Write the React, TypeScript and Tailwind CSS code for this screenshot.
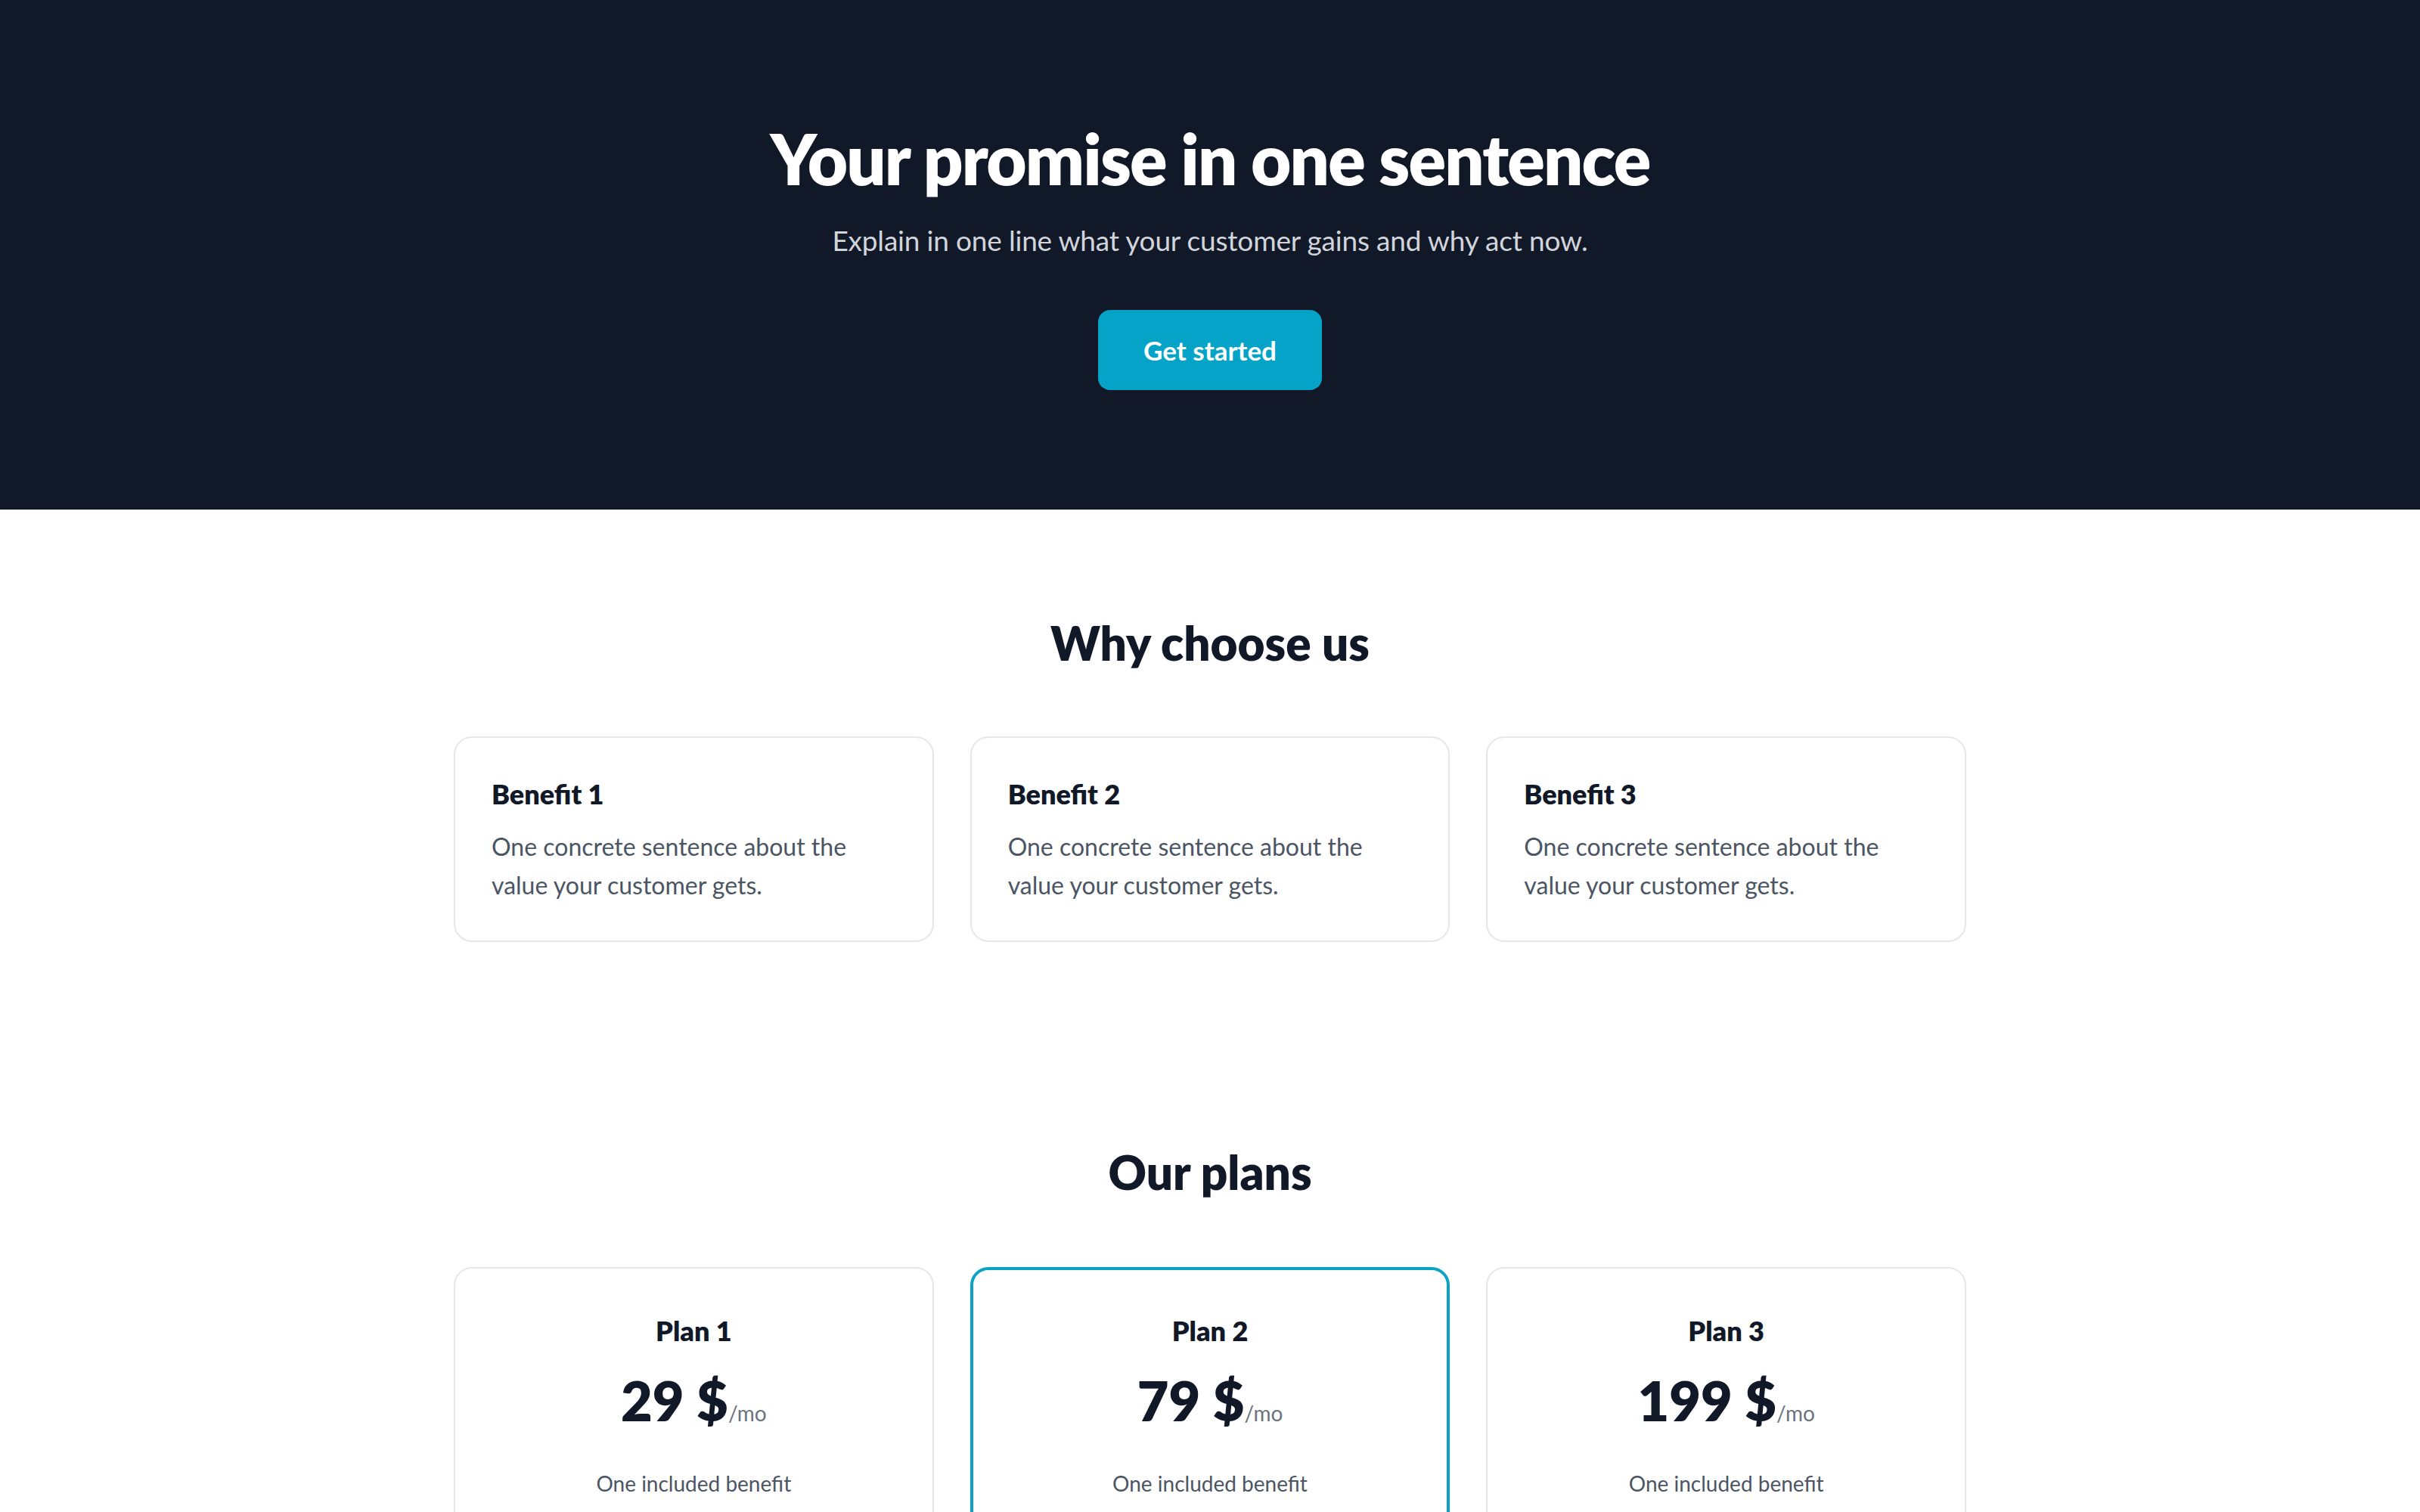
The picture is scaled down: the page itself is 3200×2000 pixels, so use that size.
import React from "react";

const benefits = [
  { title: "Benefit 1", text: "One concrete sentence about the value your customer gets." },
  { title: "Benefit 2", text: "One concrete sentence about the value your customer gets." },
  { title: "Benefit 3", text: "One concrete sentence about the value your customer gets." },
];

const plans = [
  { name: "Plan 1", price: "29 $", featured: false },
  { name: "Plan 2", price: "79 $", featured: true },
  { name: "Plan 3", price: "199 $", featured: false },
];

export default function App() {
  return (
    <div className="min-h-screen bg-white text-[#111827] font-['Lato','Liberation_Sans',sans-serif]">
      {/* Hero */}
      <header className="bg-[#111827] pt-[162px] pb-[158px] flex flex-col items-center text-center">
        <h1 className="text-[92px] leading-[96px] font-extrabold tracking-[-0.02em] text-white">
          Your promise in one sentence
        </h1>
        <p className="mt-[32px] text-[37px] leading-[56px] tracking-[-0.005em] text-[#d1d5db]">
          Explain in one line what your customer gains and why act now.
        </p>
        <button className="mt-[64px] h-[106px] px-[60px] rounded-[16px] bg-[#04a3c7] text-white text-[35px] font-bold">
          Get started
        </button>
      </header>

      {/* Benefits */}
      <section className="pt-[140px] pb-[132px]">
        <div className="w-[2000px] mx-auto">
          <h2 className="text-center text-[62px] leading-[72px] font-extrabold">Why choose us</h2>
          <div className="mt-[88px] grid grid-cols-3 gap-[48px]">
            {benefits.map((b) => (
              <div key={b.title} className="rounded-[24px] border-2 border-[#e5e7eb] pt-[46px] pb-[48px] px-[48px]">
                <h3 className="text-[36px] leading-[56px] font-extrabold">{b.title}</h3>
                <p className="mt-[16px] text-[32px] leading-[51px] text-[#4b5563]">{b.text}</p>
              </div>
            ))}
          </div>
        </div>
      </section>

      {/* Plans */}
      <section className="pt-[136px] pb-[132px]">
        <div className="w-[2000px] mx-auto">
          <h2 className="text-center text-[62px] leading-[72px] font-extrabold">Our plans</h2>
          <div className="mt-[90px] grid grid-cols-3 gap-[48px]">
            {plans.map((p) => (
              <div
                key={p.name}
                className={
                  p.featured
                    ? "rounded-[24px] border-4 border-[#0aa3c6] px-[48px] pt-[52px] pb-[48px] text-center"
                    : "rounded-[24px] border-2 border-[#e5e7eb] px-[48px] pt-[54px] pb-[48px] text-center"
                }
              >
                <h3 className="text-[36px] leading-[56px] font-extrabold">{p.name}</h3>
                <div className="mt-[24px] leading-[80px]">
                  <span className="text-[72px] font-extrabold">{p.price}</span>
                  <span className="text-[28px] text-[#6b7280]">/mo</span>
                </div>
                <ul className="mt-[28px] text-[28px] leading-[40px] text-[#4b5563]">
                  <li>One included benefit</li>
                  <li className="mt-[28px]">Another included benefit</li>
                </ul>
                <button
                  className={
                    p.featured
                      ? "mt-[48px] w-full h-[96px] rounded-[16px] bg-[#04a3c7] text-white text-[32px] font-bold"
                      : "mt-[48px] w-full h-[96px] rounded-[16px] border-2 border-[#e5e7eb] text-[32px] font-bold"
                  }
                >
                  Choose
                </button>
              </div>
            ))}
          </div>
        </div>
      </section>
    </div>
  );
}
